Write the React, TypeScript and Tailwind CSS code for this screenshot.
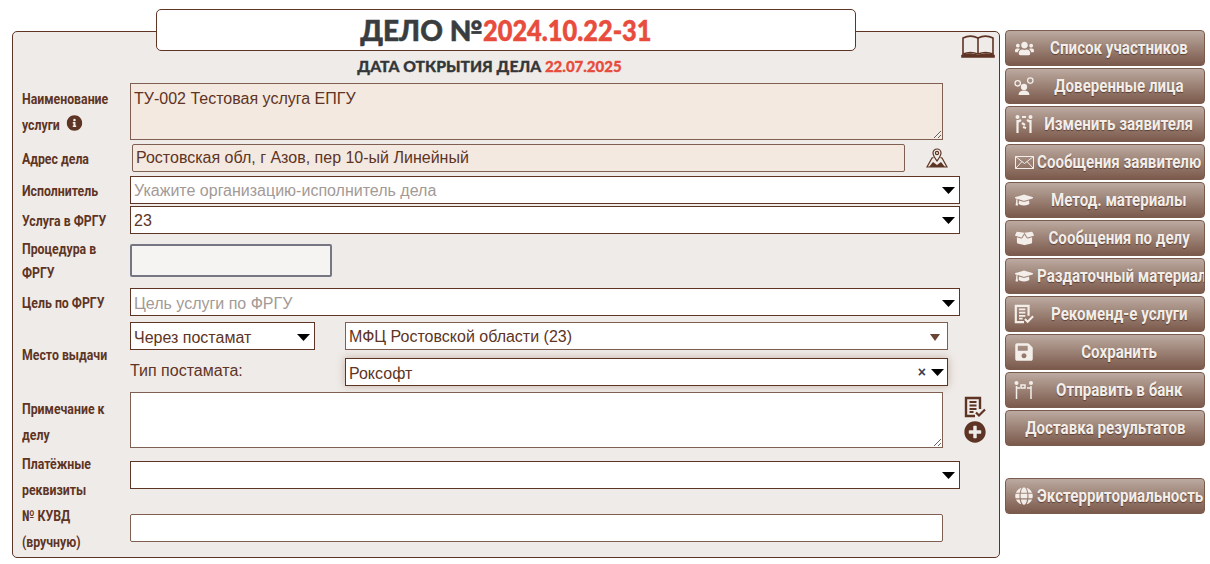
import { FaInfoCircle, FaPlusCircle, FaSave, FaUsers, FaGraduationCap, FaBoxOpen, FaGlobe } from 'react-icons/fa';

const narrow = 'font-["Roboto",sans-serif]';
const body = 'font-["Liberation_Sans",Arial,sans-serif]';

function Caret({ color = '#000', width = 13 }: { color?: string; width?: number }) {
  return (
    <svg width={width} height="7" viewBox="0 0 12 7" preserveAspectRatio="none" className="shrink-0">
      <path d="M0 0h12L6 7z" fill={color} />
    </svg>
  );
}

function BookIcon() {
  return (
    <svg width="34" height="24" viewBox="0 0 34 24" fill="none" stroke="#5e3424" strokeWidth="1.6">
      <path d="M2 4c5-2.500 10-2.500 15 0 5-2.500 10-2.500 15 0v16c-5-2-10-2-15 0-5-2-10-2-15 0z" />
      <path d="M17 4v16" />
      <path d="M1 21.500c6-2 11-2 16 0 5-2 10-2 16 0V23H1z" fill="#5e3424" />
    </svg>
  );
}

function MapIcon() {
  return (
    <svg width="22" height="20" viewBox="0 0 22 20" fill="none" stroke="#5e3424" strokeWidth="1.200">
      <path d="M11 13C8.500 9.500 7 7.500 7 5a4 4 0 0 1 8 0c0 2.500-1.500 4.500-4 8z" />
      <circle cx="11" cy="5" r="1.600" />
      <path d="M7.500 9.500 6 10 1 19h20l-5-9-1.500-.5" />
      <path d="M3 19l4-5 4 3 4-3 4 5z" fill="#5e3424" stroke="none" />
    </svg>
  );
}

function NoteIcon({ color, size = 22 }: { color: string; size?: number }) {
  return (
    <svg width={size} height={size} viewBox="0 0 22 22" fill="none" stroke={color} strokeWidth="2">
      <path d="M16 13V2H2v18h9" strokeWidth="2.400" />
      <path d="M5.500 6h7M5.500 9.500h7M5.500 13h7M5.500 16h4" />
      <path d="M12 16.500l3 3 6-6" strokeWidth="2.200" />
    </svg>
  );
}

function DelegateIcon() {
  return (
    <svg width="20" height="18" viewBox="0 0 22 20" fill="#f3eeea">
      <circle cx="11" cy="11" r="3.500" />
      <path d="M5 20c0-4 3-5 6-5s6 1 6 5z" />
      <circle cx="4" cy="7" r="3" fill="none" stroke="#f3eeea" strokeWidth="1.400" />
      <circle cx="18" cy="4" r="3" fill="none" stroke="#f3eeea" strokeWidth="1.400" />
    </svg>
  );
}

function SwapIcon() {
  return (
    <svg width="20" height="20" viewBox="0 0 20 20" fill="none" stroke="#f3eeea" strokeWidth="2.200">
      <circle cx="3.500" cy="3" r="2" fill="#f3eeea" stroke="none" />
      <circle cx="16.500" cy="3" r="2" fill="#f3eeea" stroke="none" />
      <path d="M3.500 6v13M16.500 6v13M3.500 8 7 6M16.500 8 13 6M8 3h4M8 9l3 2M12 14l-3-1" />
    </svg>
  );
}

function MailIcon() {
  return (
    <svg width="19" height="13" viewBox="0 0 19 13" fill="none" stroke="#f3eeea" strokeWidth="1">
      <path d="M.5.500h18v12H.5zM.5.500l9 7 9-7M.5 12.500l6.500-7M18.500 12.500 12 5.500" />
    </svg>
  );
}

function BankIcon() {
  return (
    <svg width="20" height="20" viewBox="0 0 20 20" fill="none" stroke="#f3eeea" strokeWidth="2.200">
      <circle cx="2.500" cy="3" r="2" fill="#f3eeea" stroke="none" />
      <circle cx="17" cy="3" r="2" fill="#f3eeea" stroke="none" />
      <path d="M2.500 6v13M17 6v13M2.500 8H6M17 8h-4M7 5h4v3H7z" strokeWidth="1.500" />
    </svg>
  );
}

const buttons = [
  { label: 'Список участников', icon: <FaUsers size={19} color="#f3eeea" />, center: true },
  { label: 'Доверенные лица', icon: <DelegateIcon />, center: true },
  { label: 'Изменить заявителя', icon: <SwapIcon />, center: true },
  { label: 'Сообщения заявителю', icon: <MailIcon /> },
  { label: 'Метод. материалы', icon: <FaGraduationCap size={18} color="#f3eeea" />, center: true },
  { label: 'Сообщения по делу', icon: <FaBoxOpen size={19} color="#f3eeea" />, center: true },
  { label: 'Раздаточный материал', icon: <FaGraduationCap size={18} color="#f3eeea" /> },
  { label: 'Рекоменд-е услуги', icon: <NoteIcon color="#f3eeea" size={20} />, center: true },
  { label: 'Сохранить', icon: <FaSave size={20} color="#f3eeea" />, center: true },
  { label: 'Отправить в банк', icon: <BankIcon />, center: true },
  { label: 'Доставка результатов', center: true },
];

function SideButton({ label, icon, center }: { label: string; icon?: React.ReactNode; center?: boolean }) {
  return (
    <button className={`flex h-9 w-[200px] shrink-0 items-center overflow-hidden whitespace-nowrap rounded-[4px] border border-[#7a5c4e] bg-gradient-to-b from-[#bcaaa0] to-[#7b5a4c] text-[#f3eeea] ${icon ? 'pl-2' : ''}`}>
      {icon && <span className="flex w-5 shrink-0 justify-center">{icon}</span>}
      <span className={`flex min-w-0 flex-1 ${center ? 'justify-center' : 'pl-[3px]'}`}>
        <span className={`${narrow} mt-[-2px] inline-block shrink-0 scale-x-[.84] text-[18px] font-bold [text-shadow:0_1px_1px_rgba(60,30,20,.6)] ${center ? '' : 'origin-left'}`}>
          {label}
        </span>
      </span>
    </button>
  );
}

function Label({ children, className = 'leading-[26px]' }: { children: React.ReactNode; className?: string }) {
  return (
    <div className="w-[108px] shrink-0">
      <div className={`${narrow} w-[132px] origin-left scale-x-[.82] whitespace-nowrap text-[15px] font-bold text-[#5e3424] ${className}`}>
        {children}
      </div>
    </div>
  );
}

function Select({ value, placeholder, className = 'w-[830px]' }: { value?: string; placeholder?: string; className?: string }) {
  return (
    <div className={`flex h-7 items-center border border-[#5e3424] bg-white pl-[3px] pr-1 text-[16px] ${className}`}>
      <span className={`flex-1 pt-[1px] ${value ? 'text-[#5e3424]' : 'text-[#a39a96]'}`}>{value ?? placeholder}</span>
      <Caret />
    </div>
  );
}

export default function App() {
  return (
    <div className={`${body} flex h-[564px] w-[1210px] overflow-hidden bg-white pl-3 pt-[30px]`}>
      <main className="relative mt-[1px] h-[527px] w-[988px] shrink-0 rounded-[5px] border border-[#5e3424] bg-[#efebe8] pl-[9px]">
        <div className="absolute left-[143px] top-[-23px] flex h-[42px] w-[700px] items-center justify-center rounded-[5px] border border-[#5e3424] bg-white font-['Lato','Open_Sans',sans-serif] text-[28px] font-black text-[#3a3d40] [-webkit-text-stroke:0.5px]">
          ДЕЛО №
          <span className="mr-[-17px] inline-block origin-left scale-x-[.905] text-[#e74c3c]">2024.10.22-31</span>
        </div>
        <div className="absolute right-[4px] top-[2px]"><BookIcon /></div>

        <div className="pr-[42px] pt-[24px] text-center font-['Lato','Open_Sans',sans-serif] text-[15.700px] font-black leading-[21px] text-[#34373a] [-webkit-text-stroke:0.3px]">
          ДАТА ОТКРЫТИЯ ДЕЛА <span className="text-[15px] text-[#e74c3c]">22.07.2025</span>
        </div>

        <div className="mt-[6px] flex h-[61px] items-start">
          <Label className="pt-[3px] leading-[26px]">
            Наименование<br />услуги
            <FaInfoCircle className="ml-[10px] inline scale-x-[1.22] align-[-1px]" size={16} />
          </Label>
          <textarea
            readOnly
            value="ТУ-002 Тестовая услуга ЕПГУ"
            className="h-[57px] w-[813px] border border-[#7f5f52] bg-[#f3e9e1] px-[3px] pt-[6px] text-[16px] leading-[18px] text-[#5e3424] outline-none"
          />
        </div>

        <div className="flex h-8 items-start">
          <Label className="pt-[2px] leading-[26px]">Адрес дела</Label>
          <div className="ml-[2px] flex h-7 w-[773px] items-center rounded-[2px] border border-[#7f5f52] bg-[#f3e9e1] pl-[3px] text-[16px] text-[#5e3424]">
            Ростовская обл, г Азов, пер 10-ый Линейный
          </div>
          <div className="ml-[21px] mt-[4px]"><MapIcon /></div>
        </div>

        <div className="flex h-[30px] items-start">
          <Label className="pt-[2px] leading-[26px]">Исполнитель</Label>
          <Select placeholder="Укажите организацию-исполнитель дела" />
        </div>

        <div className="flex h-[38px] items-start">
          <Label className="pt-[2px] leading-[26px]">Услуга в ФРГУ</Label>
          <Select value="23" />
        </div>

        <div className="flex h-[44px] items-start">
          <Label className="mt-[-7px] leading-[24px]">Процедура в<br />ФРГУ</Label>
          <div className="h-[33px] w-[202px] rounded-[2px] border-2 border-[#767683] bg-[#f6f4f2]" />
        </div>

        <div className="flex h-[34px] items-start">
          <Label className="pt-[2px] leading-[26px]">Цель по ФРГУ</Label>
          <Select placeholder="Цель услуги по ФРГУ" className="w-[830px] pt-[2px]" />
        </div>

        <div className="flex h-[70px] items-start">
          <Label className="pt-[20px] leading-[26px]">Место выдачи</Label>
          <div className="flex w-[818px] flex-col">
            <div className="flex items-start gap-[30px]">
              <Select value="Через постамат" className="w-[185px] pt-[2px]" />
              <div className="flex h-7 w-[603px] items-center border border-[#7f5f52] bg-white pl-[3px] pr-[7px] pt-[2px] text-[16px] text-[#5e3424]">
                <span className="flex-1">МФЦ Ростовской области (23)</span>
                <Caret color="#6a4435" width={10} />
              </div>
            </div>
            <div className="mt-[8px] flex items-start gap-[30px]">
              <div className="w-[185px] pt-[3px] text-[16px] leading-[20px] text-[#5e3424]">Тип постамата:</div>
              <div className="flex h-7 w-[603px] items-center border border-[#5e3424] bg-white pl-[3px] pr-[3px] text-[16px] text-[#5e3424] shadow-[0_0_8px_rgba(120,70,40,.35)]">
                <span className="flex-1 pt-[3px]">Роксофт</span>
                <span className="mr-[5px] text-[14px] font-bold leading-none text-[#3a3d50]">×</span>
                <Caret />
              </div>
            </div>
          </div>
        </div>

        <div className="flex h-[69px] items-start">
          <Label className="pt-[4px] leading-[26px]">Примечание к<br />делу</Label>
          <textarea readOnly className="h-[56px] w-[813px] border border-[#7f5f52] bg-white outline-none" />
          <div className="ml-[21px] mt-[4px] flex flex-col items-center text-[#5e3424]">
            <NoteIcon color="#5e3424" />
            <FaPlusCircle size={22} className="mt-[3px]" />
          </div>
        </div>

        <div className="flex h-[53px] items-start">
          <Label className="mt-[-10px] leading-[26px]">Платёжные<br />реквизиты</Label>
          <Select />
        </div>

        <div className="flex items-start">
          <Label className="mt-[-11px] leading-[26px]">№ КУВД<br />(вручную)</Label>
          <div className="h-7 w-[813px] rounded-[2px] border border-[#7f5f52] bg-white" />
        </div>
      </main>

      <aside className="ml-[5px] flex w-[200px] shrink-0 flex-col gap-[2px]">
        {buttons.map((b) => (
          <SideButton key={b.label} {...b} />
        ))}
        <div className="mt-[30px]">
          <SideButton label="Экстерриториальность" icon={<FaGlobe size={18} color="#f3eeea" />} />
        </div>
      </aside>
    </div>
  );
}
